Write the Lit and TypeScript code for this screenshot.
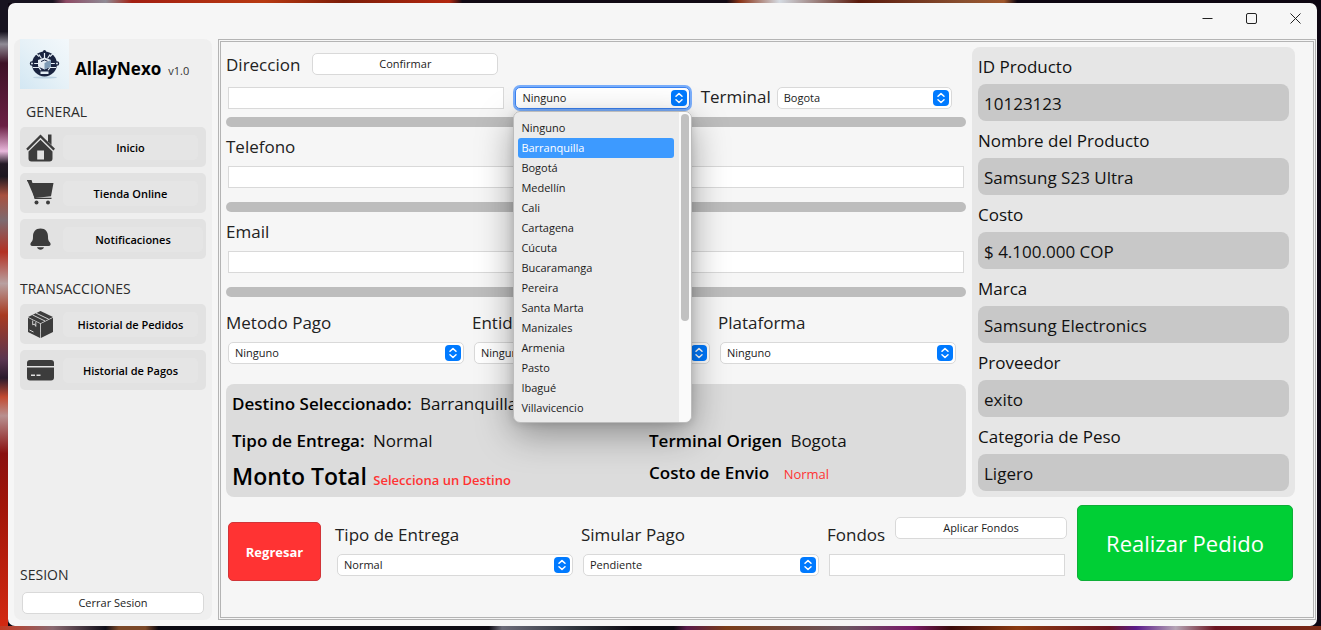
import { LitElement, html, css, svg, nothing } from "lit";
import { customElement, property, state } from "lit/decorators.js";
import { classMap } from "lit/directives/class-map.js";

const CITIES = [
  "Ninguno", "Barranquilla", "Bogotá", "Medellín", "Cali", "Cartagena", "Cúcuta",
  "Bucaramanga", "Pereira", "Santa Marta", "Manizales", "Armenia", "Pasto",
  "Ibagué", "Villavicencio",
];

const PRODUCT: [string, string][] = [
  ["ID Producto", "10123123"],
  ["Nombre del Producto", "Samsung S23 Ultra"],
  ["Costo", "$ 4.100.000 COP"],
  ["Marca", "Samsung Electronics"],
  ["Proveedor", "exito"],
  ["Categoria de Peso", "Ligero"],
];

const ICONS: Record<string, unknown> = {
  home: svg`<path d="M22 1.500h3.500v10.500L22 8.500z"/><path d="M14.500 1.500 29 15.700l-1.600 1.700L14.500 4.700 1.800 17.400.2 15.700z"/><path d="M14.500 6.800 26.500 18.500v7a3 3 0 0 1-3 3h-18a3 3 0 0 1-3-3v-7zM11.200 17.500v9h6.800v-9z" fill-rule="evenodd"/>`,
  cart: svg`<path d="M1 1h4.300l1.200 3H27.500L25 17.300 8.700 19z"/><path d="M1 1.700h3.800L9 19.300h16.500" fill="none" stroke="currentColor" stroke-width="1.200"/><circle cx="10.500" cy="23.500" r="2"/><circle cx="22" cy="23.500" r="2"/>`,
  bell: svg`<path d="M14.500 3.500c5 0 7.500 3.500 7.500 8 0 3 .3 4 2 6 1.300 1.700.5 3.500-1.500 3.500h-16c-2 0-2.800-1.800-1.500-3.500 1.700-2 2-3 2-6 0-4.500 2.500-8 7.500-8z"/><path d="M11 22.200h7c-.5 1.500-1.800 2.500-3.500 2.500s-3-1-3.500-2.500z"/>`,
  box: svg`<path d="M14.500 1 27 7 14.500 13.200 2 7z"/><path d="M2 7.700 14.100 13.700V28L2 22z"/><path d="M27 7.700 14.900 13.700V28L27 22z"/><path d="M6.500 4.900 19 11M10 3.100 22.700 9.200M6.700 10.500v4.300l1.700-.8 1.400 2.400v-4.300M3.500 20l4 2" fill="none" stroke="#e2e2e2" stroke-width=".9"/>`,
  card: svg`<path d="M4 4h21a3 3 0 0 1 3 3v3H1V7a3 3 0 0 1 3-3z"/><path d="M1 11.500h27v10a3 3 0 0 1-3 3H4a3 3 0 0 1-3-3z"/><path d="M5 19.300h4M10.500 19.300h4" stroke="#e2e2e2" stroke-width="1.500"/>`,
};

@customElement("combo-box")
class ComboBox extends LitElement {
  @property() label = "";
  @property() value = "";
  @property({ type: Boolean }) inline = false;
  @property({ type: Boolean, reflect: true }) open = false;
  @property({ attribute: false }) options: string[] = [];
  @property() hover = "";

  static styles = css`
    :host { display: block; min-width: 0; }
    .field { display: flex; flex-direction: column; }
    .field.inline { flex-direction: row; align-items: center; gap: 6px; }
    label { font-size: 17px; line-height: 24px; color: #222; padding-bottom: 7px; }
    .inline label { padding: 0 0 2px; }
    .wrap { position: relative; flex: 1; margin: 0 2px; }
    .inline .wrap { margin: 0; }
    select {
      appearance: none; display: block; box-sizing: border-box; width: 100%; height: 22px;
      margin: 0; padding: 0 26px 0 6px; border: 1px solid #d9d9d9; border-radius: 5px;
      background: #fff; font: inherit; font-size: 11px; line-height: 20px; color: #1b1b1b; outline: none;
    }
    :host([open]) select { border-color: #3b82f0; box-shadow: 0 0 0 2px #7aaefb; }
    .step { position: absolute; right: 3px; top: 3px; width: 16px; height: 16px; pointer-events: none; }
    .menu {
      position: absolute; z-index: 5; left: -2px; right: -2px; top: 24px; display: flex;
      border: 1px solid #bcbcbc; border-radius: 7px; overflow: hidden; background: #ebebeb;
    }
    .shadow {
      position: absolute; z-index: 4; left: -2px; right: -2px; top: 24px; height: 311px; border-radius: 7px;
      box-shadow: 0 12px 36px rgba(0, 0, 0, .36), 0 2px 8px rgba(0, 0, 0, .12);
    }
    ul { list-style: none; flex: 1; margin: 0; padding: 6px 5px 4px 4px; font-size: 11px; line-height: 20px; color: #1b1b1b; }
    li { padding: 0 3px; border-radius: 3px; }
    li.hover { background: #3d9aff; color: #fff; }
    .track { width: 12px; background: #fafafa; padding: 2px 1px 0 2px; box-sizing: border-box; }
    .thumb { height: 207px; width: 8px; border-radius: 4px; background: #c1c1c1; }
  `;

  render() {
    return html`
      <div class=${classMap({ field: true, inline: this.inline })}>
        ${this.label ? html`<label for="s">${this.label}</label>` : nothing}
        <div class="wrap">
          <select id="s" aria-label=${this.label || "Ciudad"}>
            <option>${this.value}</option>
            ${this.options.filter((o) => o !== this.value).map((o) => html`<option>${o}</option>`)}
          </select>
          <svg class="step" viewBox="0 0 16 16">
            <rect width="16" height="16" rx="4" fill="#007aff"></rect>
            <path d="M5 6.300 8 3.600l3 2.700M5 9.800l3 2.700 3-2.700" fill="none" stroke="#fff" stroke-width="1.500" stroke-linecap="round" stroke-linejoin="round"></path>
          </svg>
          ${this.open ? html`
            <div class="shadow"></div>
            <div class="menu">
              <ul role="listbox" aria-label="Ciudad">
                ${this.options.map((o) => html`<li role="option" class=${classMap({ hover: o === this.hover })}>${o}</li>`)}
              </ul>
              <div class="track"><div class="thumb"></div></div>
            </div>` : nothing}
        </div>
      </div>`;
  }
}

@customElement("side-bar")
class SideBar extends LitElement {
  static styles = css`
    :host {
      display: flex; flex-direction: column; box-sizing: border-box; width: 198px; flex: none;
      padding: 0 6px 6px; background: #efefef; border-radius: 8px; color: #000;
    }
    .brand { display: flex; align-items: center; height: 50px; gap: 6px; }
    .logo { width: 49px; height: 50px; flex: none; }
    .name { font-size: 17px; line-height: 24px; font-weight: 700; padding: 10px 1px 0 0; }
    .version { font-size: 11px; line-height: 16px; padding-top: 13px; color: #333; }
    h2 { margin: 0; font-size: 14px; line-height: 20px; font-weight: 500; color: #2b2b2b; }
    .general { padding: 13px 6px 5px; }
    .trans { padding: 20px 0 5px; }
    nav { display: flex; flex-direction: column; gap: 6px; }
    .item { display: flex; align-items: center; height: 40px; gap: 8px; padding: 0 8px 0 6px; border-radius: 5px; background: #e2e2e2; }
    .icon { width: 29px; height: 29px; flex: none; color: #3c3c3c; fill: currentColor; }
    .item button {
      flex: 1; height: 25px; border: 0; border-radius: 5px; background: #e5e5e5; padding: 0;
      font: inherit; font-size: 11px; font-weight: 600; color: #000; white-space: nowrap;
    }
    .item.wide { padding-right: 3px; }
    .session { margin-top: auto; padding-bottom: 7px; }
    .logout { height: 22px; margin: 0 2px; border: 1px solid #d9d9d9; border-radius: 5px; background: #fff; font: inherit; font-size: 11px; line-height: 20px; color: #1b1b1b; padding: 0; }
  `;

  item(icon: string, text: string) {
    return html`<div class=${classMap({ item: true, wide: icon === "bell" })}>
      <svg class="icon" viewBox="0 0 29 29" aria-hidden="true">${ICONS[icon]}</svg>
      <button>${text}</button>
    </div>`;
  }

  render() {
    return html`
      <div class="brand">
        <svg class="logo" viewBox="0 0 49 50" aria-hidden="true">
          <defs><linearGradient id="sky" x1="1" y1="0" x2="0" y2="1"><stop offset="0" stop-color="#f3f8fb"/><stop offset=".5" stop-color="#e6f1f7"/><stop offset="1" stop-color="#d3e7f3"/></linearGradient></defs>
          <rect width="49" height="50" fill="url(#sky)"/>
          <ellipse cx="25" cy="38.500" rx="12" ry="1" fill="#bcd2e2"/>
          <circle cx="24.500" cy="25" r="12.500" fill="#1a2440"/>
          <path d="M13 14.500h3l3 3M36 14.500h-3l-3 3" stroke="#e6f1f7" stroke-width="1.100" fill="none"/>
          <path d="M24.500 14v5M19 15.500l2.500 4M30 15.500l-2.500 4M10 24.500h8M39 24.500h-8M13 28.500h6l2 3M36 28.500h-6l-2 3" stroke="#e8f1f8" stroke-width="1.200" fill="none"/>
          <path d="M18 21l6.500-2.500 6.500 2.500v6.500l-6.500 3-6.500-3z" fill="#e4ecf3"/>
          <path d="M24.500 24l6.500-3v6.500l-6.500 3z" fill="#7f9bb5"/>
          <path d="M21 22.500l3.500-1.500 3 1.200" stroke="#1a2440" fill="none"/>
          <path d="M20 32h9v3.500h-9z" fill="#e3edf5" stroke="#1a2440"/>
          <circle cx="24.500" cy="12.500" r="1.600" fill="#1a2440"/>
          <circle cx="12" cy="24.500" r="1.600" fill="#e6f1f7" stroke="#1a2440" stroke-width="1.300"/>
          <circle cx="37" cy="24.500" r="1.600" fill="#e6f1f7" stroke="#1a2440" stroke-width="1.300"/>
        </svg>
        <span class="name">AllayNexo</span><span class="version">v1.0</span>
      </div>
      <h2 class="general">GENERAL</h2>
      <nav>${this.item("home", "Inicio")}${this.item("cart", "Tienda Online")}${this.item("bell", "Notificaciones")}</nav>
      <h2 class="trans">TRANSACCIONES</h2>
      <nav>${this.item("box", "Historial de Pedidos")}${this.item("card", "Historial de Pagos")}</nav>
      <h2 class="session">SESION</h2>
      <button class="logout">Cerrar Sesion</button>`;
  }
}

@customElement("app-root")
class AppRoot extends LitElement {
  @state() destino = "Barranquilla";

  static styles = css`
    :host {
      display: flex; box-sizing: border-box; min-height: 100vh; padding: 3px 4px 4px 8px;
      font-family: "Open Sans", "Noto Sans", sans-serif; color: #1b1b1b;
      background:
        linear-gradient(90deg, #17131f 4%, #8d4a64 5%, #8f8b95 8%, #a31f12 10%, #b83a12 20%, #7c1d08 26%, #b3270f 34%, #120a14 35%, #120a14 55%, #8a3418 56%, #d5dbe2 59%, #5a1a0c 65%, #8a5030 73%, #a0572c 76%, #0d0612 77%) top / 100% 3px no-repeat,
        linear-gradient(90deg, #c33a22, #8a6a72 4%, #12101a 8%, #7d4a2a 9%, #7d4a2a 11%, #0c0a12 12%, #0c0a12 37%, #6b6b78 38%, #2b3038 44%, #0c0a12 48%, #0c0a12 51%, #5a1a4a 52%, #7a3c18 55%, #6a5560 64%, #7a1a6a 69%, #3a0a0a 72%, #8a3a10 77%, #6b1420 84%, #5a1a8a 86%, #b5a5b5 89%, #6b1420 92%, #7a2a14) bottom / 100% 4px no-repeat,
        linear-gradient(#17131f 5%, #8f8b95 7%, #3d1226 10%, #6b1f44 20%, #e9b8dc 24%, #241a26 26%, #1d1720 28%, #a8503f 31%, #7d6a70 35%, #b33022 40%, #b8a0a0 45%, #a83a20 50%, #5a3550 57%, #2a1a2c 60%, #c24a30 63%, #b89090 66%, #8a1010 72%, #a01408 80%, #d42a12) left / 8px 100% no-repeat,
        #0d0612;
    }
    .window { flex: 1; min-width: 0; display: flex; flex-direction: column; background: #f6f6f6; border-radius: 7px; }
    .titlebar { height: 36px; flex: none; display: flex; justify-content: flex-end; }
    .titlebar button { width: 44px; height: 30px; border: 0; padding: 0; background: none; color: #222; display: grid; place-items: center; }
    .titlebar svg { width: 11px; height: 11px; fill: none; stroke: currentColor; }
    .body { flex: 1; display: flex; gap: 6px; padding: 0 1px 6px 6px; }
    .main {
      flex: 1; min-width: 0; box-sizing: border-box; border: 3px double #b4b4b4; padding: 5px 18px 16px 5px;
      display: flex; flex-direction: column; gap: 8px;
    }
    .top { display: grid; grid-template-columns: minmax(0, 740fr) minmax(0, 323fr); gap: 6px; }
    .form { display: flex; flex-direction: column; }
    .side { background: #e6e6e6; border-radius: 8px; padding: 0 6px 6px; margin: 0; font-size: 17px; line-height: 36px; color: #111; }
    .side dt { height: 37px; padding-top: 2px; box-sizing: border-box; }
    .side dd { height: 37px; margin: 0; padding: 2px 6px 0; box-sizing: border-box; background: #c8c8c8; border-radius: 8px; }
    label { font-size: 17px; line-height: 24px; color: #222; }
    input { display: block; box-sizing: border-box; height: 22px; min-width: 0; border: 1px solid #d9d9d9; background: #fff; margin: 0 2px; padding: 0 6px; font: inherit; font-size: 11px; outline: none; }
    .push { height: 22px; box-sizing: border-box; border: 1px solid #d9d9d9; border-radius: 5px; background: #fff; font: inherit; font-size: 11px; line-height: 20px; color: #1b1b1b; padding: 0; }
    .bar { height: 10px; border-radius: 5px; background: #bdbdbd; }
    .address { display: flex; align-items: center; gap: 12px; padding-top: 6px; }
    .address .push { width: 186px; margin-bottom: 2px; }
    .line { display: grid; grid-template-columns: 276fr 178fr 251fr; gap: 9px; align-items: center; height: 26px; padding: 8px 14px 6px 2px; }
    .line input { margin: 0; }
    .block { display: flex; flex-direction: column; padding: 8px 0 14px; gap: 7px; }
    .cols { display: grid; grid-template-columns: repeat(3, minmax(0, 1fr)); gap: 6px; padding: 14px 8px 20px 0; }
    .info {
      display: grid; grid-template-columns: 417fr 311fr; align-items: center; box-sizing: border-box; height: 113px;
      grid-template-rows: 39px 35px 35px; padding: 0 6px; border-radius: 8px; background: #dcdcdc; font-size: 17px; line-height: 24px; color: #111;
    }
    .info p { margin: 0; white-space: nowrap; }
    .info b { font-weight: 600; color: #000; margin-right: 4px; }
    .info .wide { grid-column: 1 / -1; }
    .info .total { font-size: 23px; line-height: 32px; margin-right: 2px; }
    .info .alert { font-size: 13px; color: #f33; font-weight: 600; }
    .info .cost { align-self: start; padding-top: 3px; }
    .info .note { font-size: 13px; color: #f33; margin-left: 6px; }
    .bottom { display: flex; align-items: flex-end; padding: 0 2px; }
    .back { width: 93px; height: 59px; flex: none; border: 1px solid #d13438; border-radius: 5px; background: #f33; color: #fff; font: inherit; font-size: 13px; font-weight: 700; padding: 0; margin-right: 14px; }
    .trio { flex: 1; display: grid; grid-template-columns: repeat(3, minmax(0, 1fr)); gap: 6px; padding-bottom: 5px; margin-right: 10px; }
    .funds { display: flex; flex-direction: column; }
    .funds .head { display: flex; justify-content: space-between; gap: 8px; height: 31px; }
    .funds .push { flex: 0 1 172px; margin-top: -6px; }
    .order { width: 216px; height: 76px; flex: none; border: 1px solid #0fae38; border-radius: 5px; background: #00cf35; color: #fff; font: inherit; font-size: 22px; padding: 0; }
  `;

  entry(id: string, text: string) {
    return html`<div class="block"><label for=${id}>${text}</label><input id=${id} type="text"></div><div class="bar"></div>`;
  }

  render() {
    return html`
      <div class="window">
        <div class="titlebar">
          <button aria-label="Minimizar"><svg viewBox="0 0 11 11"><path d="M.5 5.500h10"/></svg></button>
          <button aria-label="Maximizar"><svg viewBox="0 0 11 11"><rect x=".5" y=".5" width="10" height="10" rx="1.500"/></svg></button>
          <button aria-label="Cerrar"><svg viewBox="0 0 11 11"><path d="M.5.5l10 10M10.500.5l-10 10"/></svg></button>
        </div>
        <div class="body">
          <side-bar></side-bar>
          <main class="main">
            <div class="top">
              <div class="form">
                <div class="address"><label for="dir">Direccion</label><button class="push">Confirmar</button></div>
                <div class="line">
                  <input id="dir" type="text">
                  <combo-box open value="Ninguno" .options=${CITIES} .hover=${this.destino}></combo-box>
                  <combo-box inline label="Terminal" value="Bogota"></combo-box>
                </div>
                <div class="bar"></div>
                ${this.entry("tel", "Telefono")}
                ${this.entry("mail", "Email")}
                <div class="cols">
                  <combo-box label="Metodo Pago" value="Ninguno"></combo-box>
                  <combo-box label="Entidad" value="Ninguno"></combo-box>
                  <combo-box label="Plataforma" value="Ninguno"></combo-box>
                </div>
                <div class="info">
                  <p class="wide"><b>Destino Seleccionado:</b> ${this.destino}</p>
                  <p><b>Tipo de Entrega:</b> Normal</p>
                  <p><b>Terminal Origen</b> Bogota</p>
                  <p><b class="total">Monto Total</b> <span class="alert">Selecciona un Destino</span></p>
                  <p class="cost"><b>Costo de Envio</b> <span class="note">Normal</span></p>
                </div>
              </div>
              <dl class="side">${PRODUCT.map(([k, v]) => html`<dt>${k}</dt><dd>${v}</dd>`)}</dl>
            </div>
            <div class="bottom">
              <button class="back">Regresar</button>
              <div class="trio">
                <combo-box label="Tipo de Entrega" value="Normal"></combo-box>
                <combo-box label="Simular Pago" value="Pendiente"></combo-box>
                <div class="funds">
                  <div class="head"><label for="fondos">Fondos</label><button class="push">Aplicar Fondos</button></div>
                  <input id="fondos" type="text">
                </div>
              </div>
              <button class="order">Realizar Pedido</button>
            </div>
          </main>
        </div>
      </div>`;
  }
}
